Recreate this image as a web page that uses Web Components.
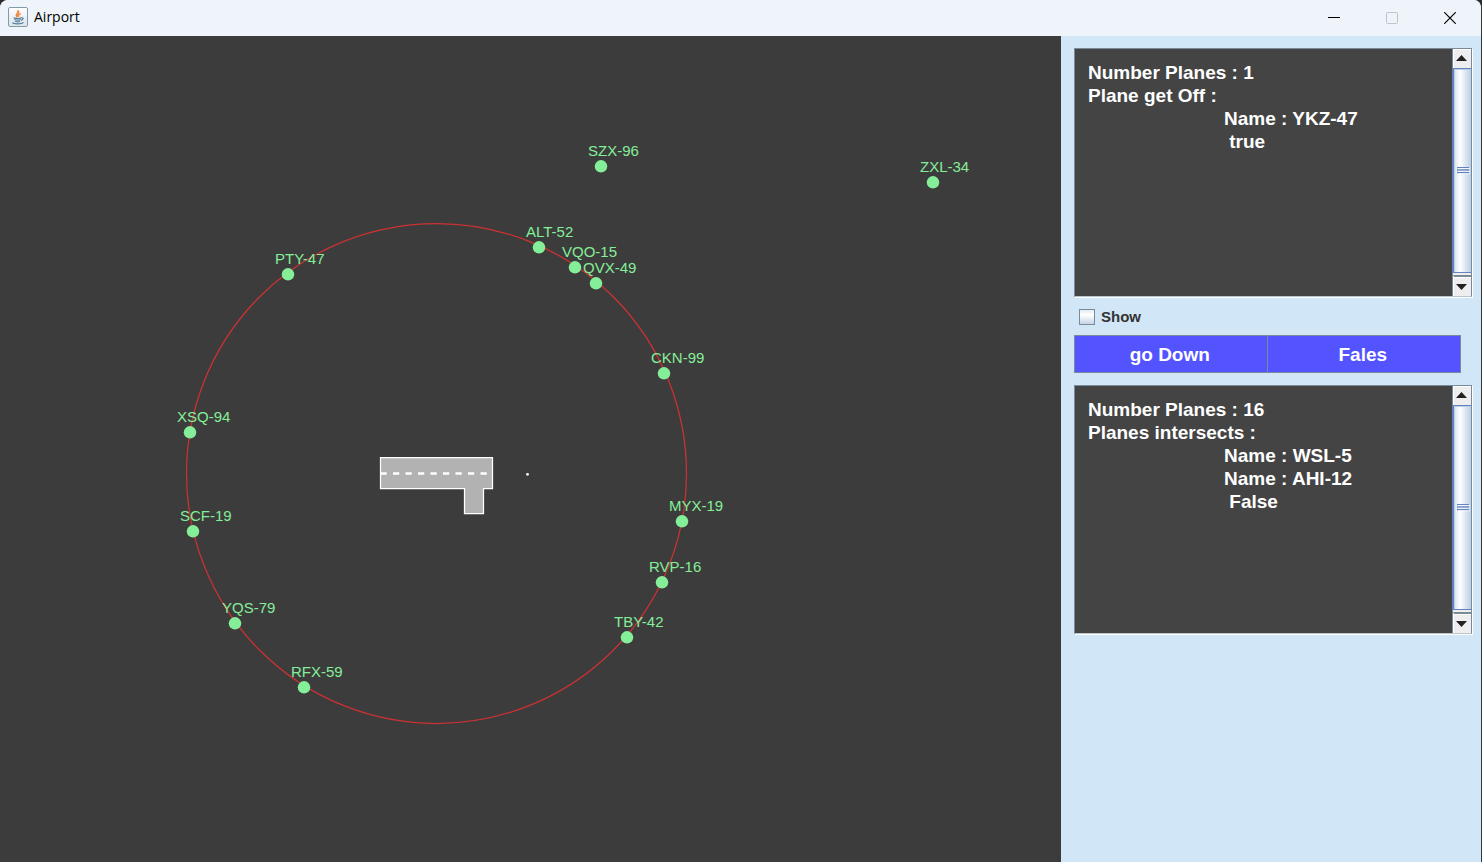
<!DOCTYPE html>
<html lang="en">
<head>
<meta charset="utf-8">
<title>Airport</title>
<style>
html, body { margin: 0; height: 100%; }
body { background: #2b2b2b; font-family: "Liberation Sans", Arial, sans-serif; overflow: hidden; }
</style>
</head>
<body>
<airport-window>
  <title-bar slot="title">Airport</title-bar>
  <radar-map slot="map">
    <plane-marker x="601" y="130">SZX-96</plane-marker>
    <plane-marker x="933" y="146">ZXL-34</plane-marker>
    <plane-marker x="539" y="211">ALT-52</plane-marker>
    <plane-marker x="575" y="231">VQO-15</plane-marker>
    <plane-marker x="596" y="247">QVX-49</plane-marker>
    <plane-marker x="288" y="238">PTY-47</plane-marker>
    <plane-marker x="664" y="337">CKN-99</plane-marker>
    <plane-marker x="190" y="396">XSQ-94</plane-marker>
    <plane-marker x="682" y="485">MYX-19</plane-marker>
    <plane-marker x="193" y="495">SCF-19</plane-marker>
    <plane-marker x="662" y="546">RVP-16</plane-marker>
    <plane-marker x="235" y="587">YQS-79</plane-marker>
    <plane-marker x="627" y="601">TBY-42</plane-marker>
    <plane-marker x="304" y="651">RFX-59</plane-marker>
  </radar-map>
  <control-panel slot="side"></control-panel>
</airport-window>
<script>
const define = (name, html, setup) => {
  const template = document.createElement('template');
  template.innerHTML = html;
  customElements.define(name, class extends HTMLElement {
    constructor() {
      super();
      this.attachShadow({ mode: 'open' }).append(template.content.cloneNode(true));
    }
    connectedCallback() { if (setup) setup(this, this.shadowRoot); }
  });
};

define('airport-window', `
<style>
:host { display: grid; grid-template: 36px 1fr / minmax(0, 1fr) 420px; height: 100vh; box-sizing: border-box;
  border-right: 1px solid #35383b; border-radius: 8px 8px 0 0; overflow: hidden; background: #d1e6f6; }
slot[name=title]::slotted(*) { grid-column: 1 / -1; }
</style>
<slot name="title"></slot><slot name="map"></slot><slot name="side"></slot>`);

define('title-bar', `
<style>
:host { display: flex; align-items: center; padding: 0 2px 0 8px; background: #eff4fb;
  font: 14px/20px "Open Sans", "Noto Sans", sans-serif; color: #000; }
.logo { width: 20px; height: 20px; margin: 0 6px 2px 0; }
h1 { margin: 0; padding-bottom: 2px; flex: 1; font: inherit; }
h1 slot { display: inline; }
button { width: 58px; height: 34px; padding: 0; border: 0; background: none; display: grid; place-items: center; }
svg { display: block; }
</style>
<svg class="logo" viewBox="0 0 20 20" aria-hidden="true">
  <defs><linearGradient id="g" x2="0" y2="1"><stop stop-color="#fff"/><stop offset="1" stop-color="#dde3e8"/></linearGradient></defs>
  <rect x=".5" y=".5" width="19" height="19" rx="1.5" fill="url(#g)" stroke="#7f9cad"/>
  <path d="M9.2 10.2C5.8 7.4 11.2 6.4 9.8 3.2c3.2 2.6-2.2 4 .2 6.6M10.800 9.800c-1.400-1.800 1-2.400 2-3.300" fill="none" stroke="#ed8b42" stroke-width="1.300"/>
  <path d="M5.500 10.700c2 .8 6 .8 8 0M6.300 12.500c2 .7 5 .7 6.500 0M7 14.200c1.500.6 4 .6 5 0M13.500 10.800c2.500-.4 2 2-.5 2.500M4.500 15.500c1 1.800 9 1.800 11-.2" fill="none" stroke="#527f9e" stroke-width="1.200"/>
</svg>
<h1><slot></slot></h1>
<button aria-label="Minimize"><svg width="12" height="12"><path d="M0 5.500h12" stroke="#000"/></svg></button>
<button aria-label="Maximize" disabled><svg width="12" height="12"><rect x=".5" y=".5" width="11" height="11" rx="1" fill="none" stroke="#c1c4c8"/></svg></button>
<button aria-label="Close"><svg width="12" height="12"><path d="M.3.3l11.400 11.400M11.700.3L.3 11.700" stroke="#000" stroke-width="1.200"/></svg></button>`);

define('radar-map', `
<style>
:host { display: block; position: relative; overflow: hidden; background: #3c3c3c; }
svg { display: block; }
</style>
<svg width="760" height="760" aria-hidden="true">
  <circle cx="436.500" cy="437.500" r="250" fill="none" stroke="#cb3234" stroke-width="1.250"/>
  <path d="M380.500 421.500h112v31h-9v25h-19v-25h-84z" fill="#b2b2b2" stroke="#fff" stroke-width="1.250"/>
  <path d="M380.500 437.500h109" stroke="#fff" stroke-width="2.500" stroke-dasharray="6.250 6.250"/>
  <circle cx="527.500" cy="438.300" r="1.400" fill="#fff"/>
</svg>
<slot></slot>`);

define('plane-marker', `
<style>
:host { position: absolute; color: #85ee98; font: 15px/16px "Liberation Sans", Arial, sans-serif; white-space: nowrap; }
.label { display: block; }
svg { display: block; margin-left: 6px; }
</style>
<span class="label"><slot></slot></span>
<svg width="14" height="14" aria-hidden="true"><circle cx="7" cy="7.300" r="6.250" fill="#85ee98"/></svg>`,
(el) => {
  el.style.left = (el.getAttribute('x') - 13) + 'px';
  el.style.top = (el.getAttribute('y') - 23) + 'px';
});

define('control-panel', `
<style>
:host { display: flex; flex-direction: column; padding: 12px 9px 0 13px; background: #d1e6f6; }
label { display: flex; align-items: center; gap: 6px; height: 16px; margin: 12px 0 10px 5px; font: bold 15px/16px "Liberation Sans", Arial, sans-serif; color: #333; }
input { appearance: none; margin: 0; width: 16px; height: 16px; border: 1px solid #7a8a99; background: linear-gradient(#e3ebf3, #fff 35%, #c3d4e6); }
.row { display: grid; grid-template-columns: 1fr 1fr; margin: 0 11px 12px 0; border: 1px solid #7a8a99; }
.row button { height: 36px; padding: 2px 2px 0 0; border: 0; background: #5353ff; color: #fff; font: bold 19px/22px "Liberation Sans", Arial, sans-serif; }
.row button:first-child { border-right: 1px solid #7a8a99; }
</style>
<log-pane label="Landing planes">Number Planes : 1
Plane get Off :
&#9;Name : YKZ-47
&#9; true</log-pane>
<label><input type="checkbox">Show</label>
<div class="row"><button>go Down</button><button>Fales</button></div>
<log-pane label="Intersecting planes">Number Planes : 16
Planes intersects :
&#9;Name : WSL-5
&#9;Name : AHI-12
&#9; False</log-pane>`);

define('log-pane', `
<style>
:host { display: flex; height: 247px; border: 1px solid #7a8a99; border-bottom-color: #b9c4cd; box-shadow: 1px 1px #fff; background: #444; }
textarea { flex: 1; min-width: 0; box-sizing: border-box; margin: 0; padding: 12px 0 0 13px; border: 0; outline: 0; resize: none; overflow: hidden;
  background: #444; color: #fff; font: bold 19px/23px "Liberation Sans", Arial, sans-serif; white-space: pre; tab-size: 136px; }
.bar { width: 18px; display: flex; flex-direction: column; border-left: 1px solid #7a8a99; background: #eee; }
button { height: 19px; padding: 0 0 0 2px; border: 0; border-left: 1px solid #fff; border-top: 1px solid #fff; background: #eee; }
svg { display: block; }
.thumb { flex: 1; box-sizing: border-box; display: grid; place-items: center; margin: 0 0 2px -1px; border: 1px solid #6382bf; border-width: 1px 0 1px 2px; box-shadow: inset 1px 1px #b8cfe5;
  background: linear-gradient(90deg, #d3e1ef, #fff 35%, #b8cfe5); }
.down { height: 21px; border-top: 2px solid #7a8a99; box-shadow: inset 0 1px #fff; }
</style>
<textarea readonly></textarea>
<div class="bar">
  <button aria-label="Scroll up"><svg width="12" height="18"><path d="M0 11h11L5.500 5z" fill="#222"/></svg></button>
  <div class="thumb"><svg width="14" height="8"><path d="M1 .5h12M1 3h12M1 5.500h12" stroke="#6382bf" stroke-width="1.500"/><path d="M2 1.500h12M2 4.300h12M2 6.800h12" stroke="#fff" stroke-width=".8"/></svg></div>
  <button class="down" aria-label="Scroll down"><svg width="12" height="18"><path d="M0 6h11L5.500 12z" fill="#222"/></svg></button>
</div>`,
(el, root) => {
  const area = root.querySelector('textarea');
  area.setAttribute('aria-label', el.getAttribute('label'));
  area.textContent = el.textContent;
});
</script>
</body>
</html>
